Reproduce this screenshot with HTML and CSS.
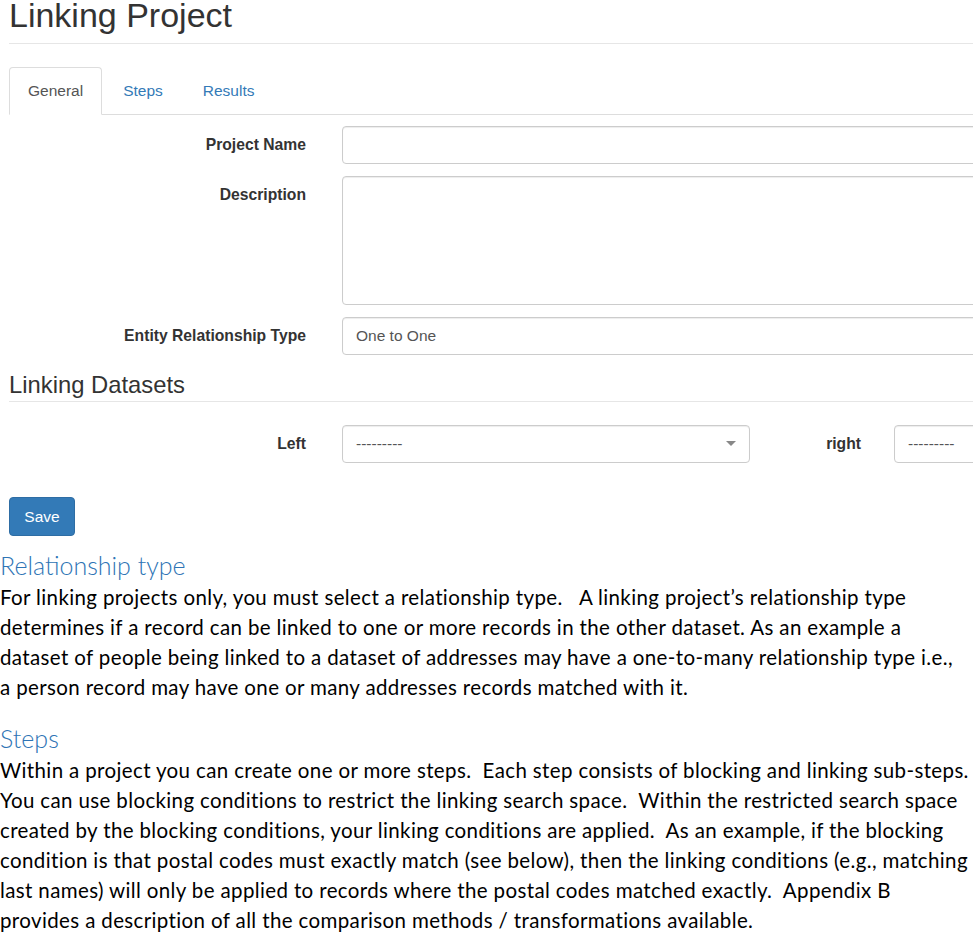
FILE: index.html
```html
<!DOCTYPE html>
<html lang="en">
<head>
<meta charset="utf-8">
<title>Linking Project</title>
<link rel="stylesheet" href="styles.css">
</head>
<body>
<div class="page">
  <div class="app">
    <h1 class="title">Linking Project</h1>
    <ul class="tabs">
      <li class="tab active"><a href="#">General</a></li>
      <li class="tab"><a href="#">Steps</a></li>
      <li class="tab"><a href="#">Results</a></li>
    </ul>
    <form class="form">
      <div class="row">
        <label class="label">Project Name</label>
        <div class="control input"></div>
      </div>
      <div class="row">
        <label class="label">Description</label>
        <div class="control textarea"></div>
      </div>
      <div class="row">
        <label class="label">Entity Relationship Type</label>
        <div class="control input"><span class="value">One to One</span></div>
      </div>
      <h3 class="section">Linking Datasets</h3>
      <div class="row datasets">
        <label class="label">Left</label>
        <div class="control select left">
          <span class="dashes">---------</span>
          <svg class="caret" width="10" height="6" viewBox="0 0 10 6"><path d="M0 0H10L5 5Z" fill="#888"/></svg>
        </div>
        <label class="label right-label">right</label>
        <div class="control select right"><span class="dashes">---------</span></div>
      </div>
      <button type="button" class="btn">Save</button>
    </form>
  </div>
  <div class="doc">
    <h2 class="doc-heading">Relationship type</h2>
    <p class="doc-text">For linking projects only, you must select a relationship type.&nbsp;&nbsp; A linking project’s relationship type<br>determines if a record can be linked to one or more records in the other dataset. As an example a<br>dataset of people being linked to a dataset of addresses may have a one-to-many relationship type i.e.,<br>a person record may have one or many addresses records matched with it.</p>
    <h2 class="doc-heading steps">Steps</h2>
    <p class="doc-text">Within a project you can create one or more steps.&nbsp; Each step consists of blocking and linking sub-steps.<br>You can use blocking conditions to restrict the linking search space.&nbsp; Within the restricted search space<br>created by the blocking conditions, your linking conditions are applied.&nbsp; As an example, if the blocking<br>condition is that postal codes must exactly match (see below), then the linking conditions (e.g., matching<br>last names) will only be applied to records where the postal codes matched exactly.&nbsp; Appendix B<br>provides a description of all the comparison methods / transformations available.</p>
  </div>
</div>
</body>
</html>
```

FILE: styles.css
```css
html, body {
  margin: 0;
  padding: 0;
  background: #fff;
  overflow: hidden;
}
.page {
  width: 973px;
  height: 933px;
  overflow: hidden;
}
.app {
  width: 1300px;
  padding-left: 9px;
  font-family: "Liberation Sans", Arial, sans-serif;
  color: #333;
}
.title {
  margin: -2px 0 0 0;
  font-size: 34px;
  line-height: 34px;
  font-weight: normal;
  padding-bottom: 11px;
  border-bottom: 1px solid #e6e6e6;
}
.tabs {
  list-style: none;
  margin: 23px 0 0 0;
  padding: 0;
  display: flex;
  border-bottom: 1px solid #ddd;
  height: 47px;
}
.tab {
  margin-right: 2px;
}
.tab a {
  display: block;
  box-sizing: border-box;
  height: 48px;
  line-height: 46px;
  padding: 0 18px;
  border: 1px solid transparent;
  border-radius: 4px 4px 0 0;
  font-size: 15.5px;
  color: #337ab7;
  text-decoration: none;
}
.tab.active a {
  color: #555;
  background: #fff;
  border-color: #ddd #ddd transparent #ddd;
}
.form {
  padding-top: 11px;
  display: flex;
  flex-direction: column;
  align-items: flex-start;
}
.row {
  display: flex;
  align-items: flex-start;
  margin-bottom: 12px;
}
.label {
  width: 297px;
  margin-right: 36px;
  text-align: right;
  font-weight: bold;
  font-size: 15.7px;
  line-height: 38px;
  color: #333;
}
.control {
  box-sizing: border-box;
  height: 38px;
  width: 800px;
  border: 1px solid #ccc;
  border-radius: 4px;
  box-shadow: inset 0 1px 1px rgba(0,0,0,.075);
  background: #fff;
  padding: 0 13px;
  font-size: 15.5px;
  line-height: 36px;
  color: #555;
}
.textarea {
  height: 129px;
}
.section {
  margin: 5px 0 0 0;
  width: 1291px;
  font-size: 23.8px;
  line-height: 25px;
  font-weight: normal;
  color: #333;
  padding-bottom: 4px;
  border-bottom: 1px solid #e6e6e6;
}
.datasets {
  margin-top: 23px;
  margin-bottom: 0;
}
.select {
  display: flex;
  align-items: center;
  justify-content: space-between;
}
.select.left {
  width: 408px;
  padding-right: 13px;
}
.dashes {
  font-size: 15.5px;
  color: #555;
}
.caret {
  display: block;
}
.right-label {
  width: 111px;
  margin-right: 33px;
}
.select.right {
  width: 408px;
}
.btn {
  margin-top: 34px;
  box-sizing: border-box;
  width: 66px;
  height: 39px;
  border: 1px solid #2e6da4;
  border-radius: 4px;
  background: #337ab7;
  color: #fff;
  font-family: "Liberation Sans", Arial, sans-serif;
  font-size: 15.5px;
  padding: 0;
}
.doc {
  margin-top: 14px;
  font-family: Lato, "Open Sans", sans-serif;
  color: #000;
}
.doc-heading {
  margin: 0;
  font-size: 25px;
  line-height: 30px;
  font-weight: 300;
  color: #2e74b5;
  white-space: nowrap;
}
.doc-heading.steps {
  margin-top: 21px;
}
.doc-text {
  margin: 2px 0 0 0;
  font-size: 20.5px;
  letter-spacing: 0.37px;
  line-height: 30px;
  white-space: nowrap;
}
```
